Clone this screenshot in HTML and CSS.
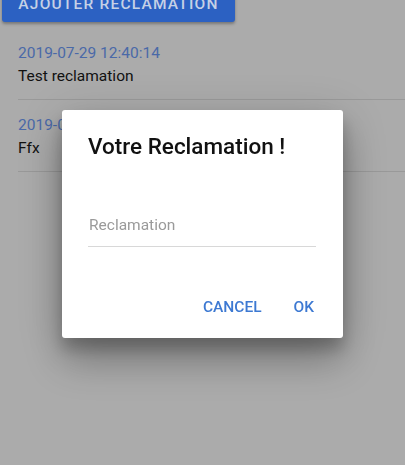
FILE: index.html
```html
<!DOCTYPE html>
<html lang="fr">
<head>
    <meta charset="UTF-8">
    <meta name="viewport" content="width=device-width, initial-scale=1.0">
    <title>Reclamations</title>
    <link rel="stylesheet" href="styles.css">
</head>
<body>
    <div class="page">
        <!-- bouton ajouter -->
        <a href="JavaScript:;" class="btn-add">AJOUTER RECLAMATION</a>
        <!-- liste des reclamations -->
        <ul class="list">
            <li>
                <p class="date">2019-07-29 12:40:14</p>
                <p class="text">Test reclamation</p>
            </li>
            <li>
                <p class="date">2019-07-29 12:41:02</p>
                <p class="text">Ffx</p>
            </li>
        </ul>
    </div>
    <!-- boite de dialogue -->
    <div class="overlay">
        <div class="dialog">
            <h2 class="dialog-title">Votre Reclamation !</h2>
            <input class="dialog-input" type="text" placeholder="Reclamation">
            <div class="dialog-actions">
                <a href="JavaScript:;">CANCEL</a>
                <a href="JavaScript:;">OK</a>
            </div>
        </div>
    </div>
</body>
</html>
```

FILE: styles.css
```css
* {
    margin: 0;
    padding: 0;
    box-sizing: border-box;
}
a {
    text-decoration: none;
}
li {
    list-style: none;
}
body {
    width: 405px;
    height: 465px;
    overflow: hidden;
    background-color: #ababab;
    font-family: Roboto, "Liberation Sans", sans-serif;
    color: #111;
}
.page {
    margin-top: -14px;
}
.btn-add {
    display: block;
    width: 233px;
    height: 36px;
    margin-left: 2px;
    background-color: #2c61c2;
    border-radius: 3px;
    box-shadow: 0 2px 3px rgba(0, 0, 0, .3);
    color: #c6d1e6;
    font-size: 15.5px;
    font-weight: 500;
    letter-spacing: 1.2px;
    line-height: 36px;
    text-align: center;
}
.list {
    margin-left: 18px;
    margin-top: 6px;
}
.list li {
    height: 72px;
    padding-top: 14px;
    border-bottom: 1px solid #999;
}
.date {
    color: #4a69a8;
    font-size: 15.5px;
    line-height: 22px;
}
.text {
    font-size: 15.5px;
    line-height: 24px;
}
.overlay {
    position: fixed;
    top: 0;
    left: 0;
    right: 0;
    bottom: 0;
    display: flex;
    justify-content: center;
    align-items: flex-start;
    padding-top: 110px;
}
.dialog {
    width: 281px;
    height: 228px;
    background-color: #fff;
    border-radius: 3px;
    box-shadow: 0 24px 38px rgba(0, 0, 0, .22), 0 9px 46px rgba(0, 0, 0, .18), 0 11px 15px rgba(0, 0, 0, .2);
    padding: 22px 27px 0 26px;
}
.dialog-title {
    font-size: 22.5px;
    font-weight: 500;
    line-height: 28px;
    color: #111;
}
.dialog-input {
    display: block;
    width: 100%;
    margin-top: 55px;
    padding: 0 0 11px 1px;
    border: none;
    border-bottom: 1px solid #d8d8d8;
    outline: none;
    font-family: inherit;
    font-size: 15.5px;
    line-height: 20px;
    color: #111;
    background: transparent;
}
.dialog-input::placeholder {
    color: #9a9a9a;
}
.dialog-actions {
    display: flex;
    justify-content: flex-end;
    gap: 32px;
    margin-top: 50px;
    margin-right: 2px;
}
.dialog-actions a {
    color: #3d79d2;
    font-size: 15.5px;
    font-weight: 500;
    line-height: 20px;
}
```
